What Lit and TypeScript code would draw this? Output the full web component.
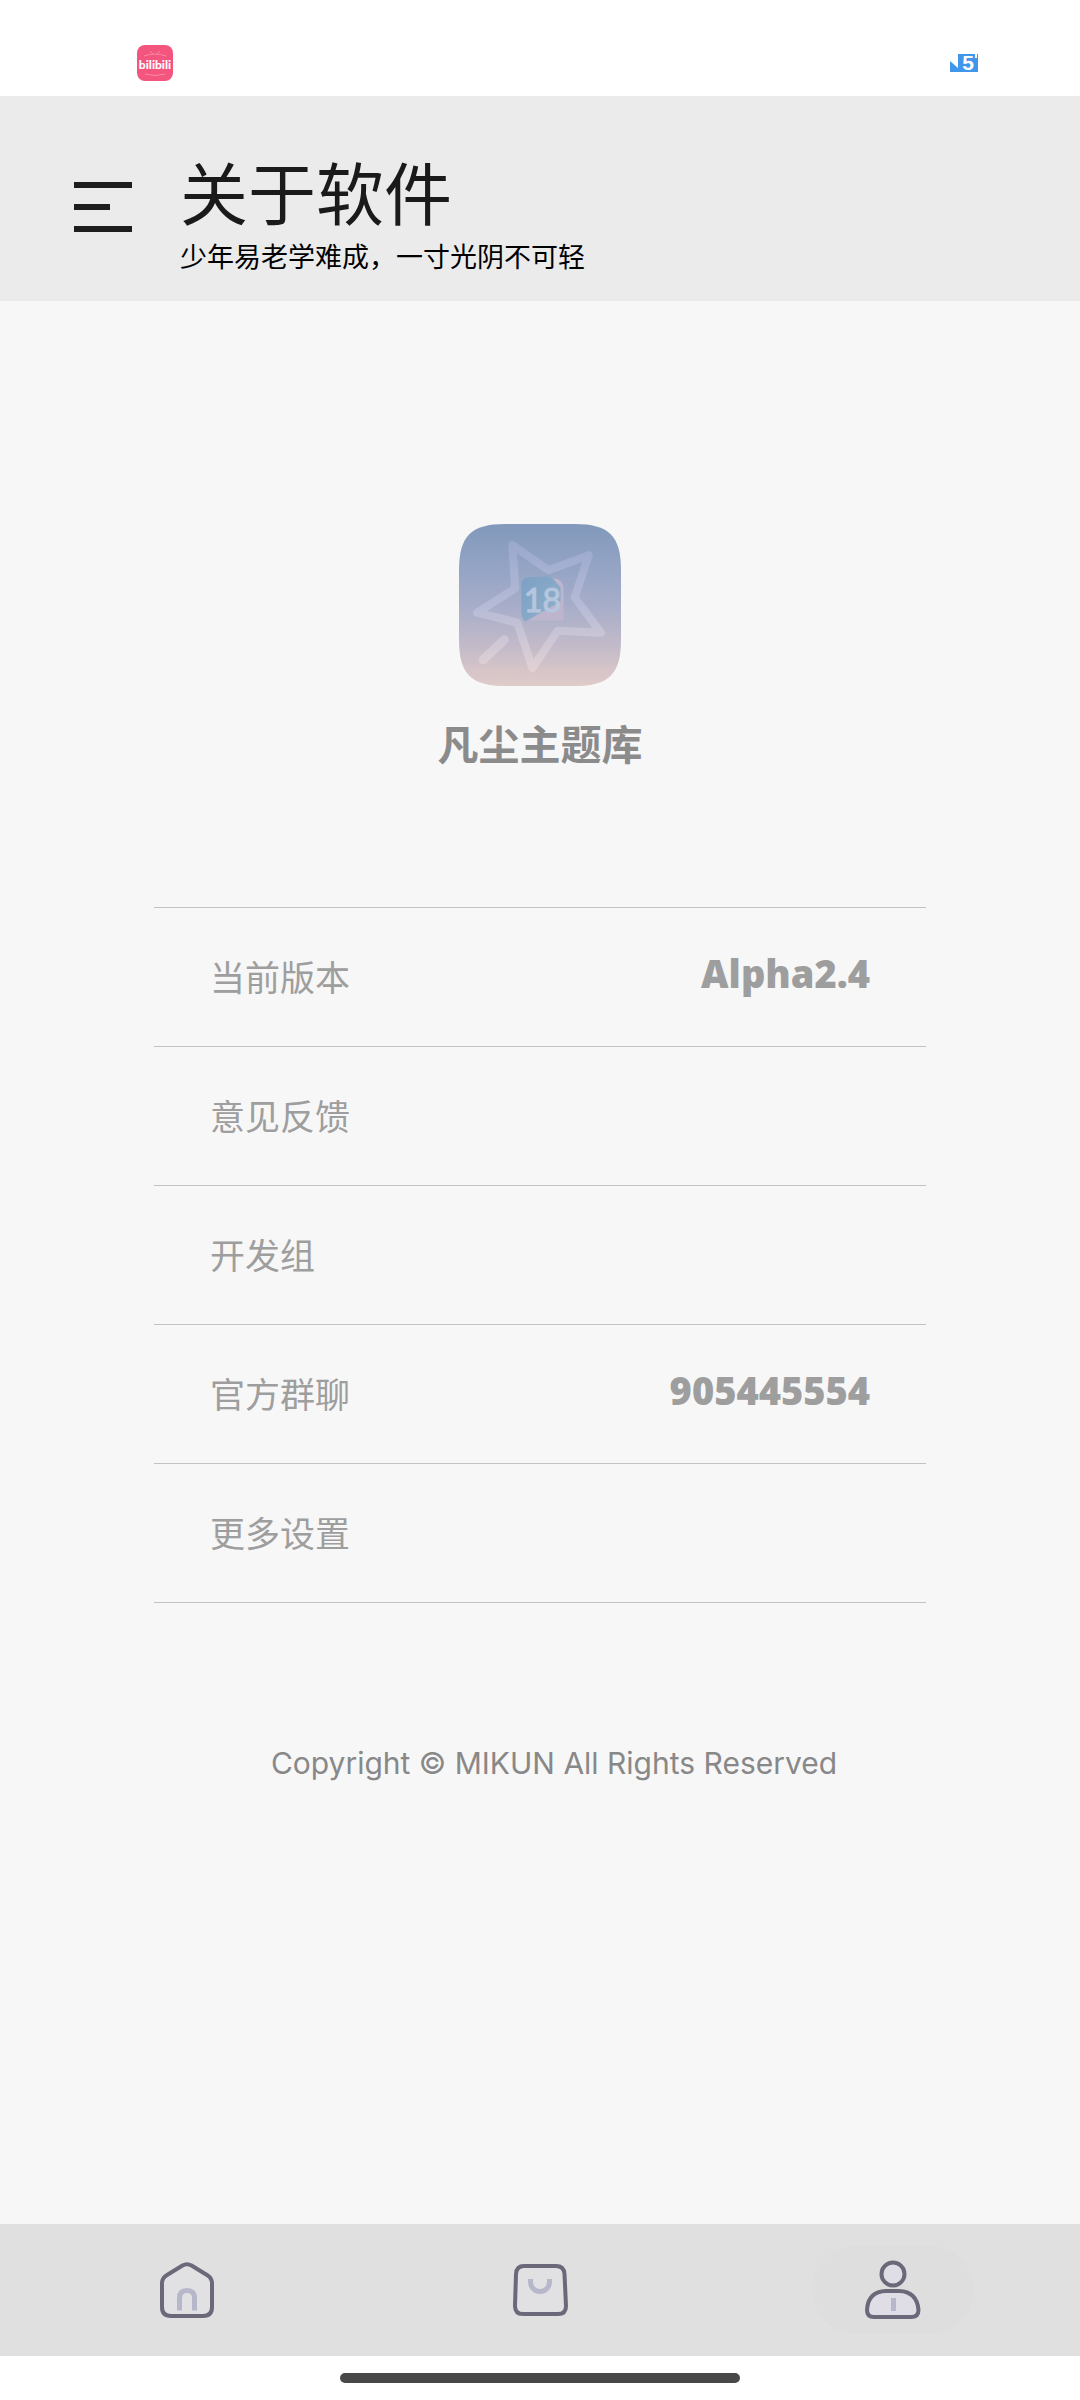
import { LitElement, html, css, svg, nothing } from "lit";
import { customElement, state } from "lit/decorators.js";
import { classMap } from "lit/directives/class-map.js";

interface Row {
  label: string;
  value?: string;
}

const rows: Row[] = [
  { label: "当前版本", value: "Alpha2.4" },
  { label: "意见反馈" },
  { label: "开发组" },
  { label: "官方群聊", value: "905445554" },
  { label: "更多设置" },
];

const homeIcon = svg`
  <path class="fill" d="M25.500 5.500Q30 3 34.500 5.500L50 15Q55 18 55 23V47Q55 56 46 56H14Q5 56 5 47V23Q5 18 10 15Z"/>
  <path class="accent" d="M22.500 50.500V38Q22.500 30.500 30 30.500T37.500 38V50.500"/>`;

const bagIcon = svg`
  <path class="fill" d="M14 6H46Q54 6 54.500 14L56 46Q56 54 48 54H13Q5 54 5 46L6 14Q6.500 6 14 6Z"/>
  <path class="accent" d="M20.500 19V22A9.500 9.500 0 0 0 39.500 22V19"/>`;

const userIcon = svg`
  <circle class="fill" cx="30" cy="14" r="11.500"/>
  <path class="fill" d="M23 31H36Q54 31.500 55.500 50Q55.500 57 48 57H11Q4 57 4 50Q5 31.500 23 31Z"/>
  <path class="accent" d="M30.500 38V51" stroke-linecap="butt"/>`;

const tabs = [
  { id: "home", label: "首页", icon: homeIcon },
  { id: "store", label: "商店", icon: bagIcon },
  { id: "me", label: "我的", icon: userIcon },
];

@customElement("status-bar")
export class StatusBar extends LitElement {
  static styles = css`
    :host {
      display: flex;
      justify-content: space-between;
      align-items: center;
      box-sizing: border-box;
      height: 96px;
      padding: 30px 100px 0 137px;
      background: #ffffff;
    }
    .icon {
      display: block;
    }
  `;

  render() {
    return html`
      <svg class="icon" width="36" height="36" viewBox="0 0 36 36" role="img" aria-label="bilibili">
        <rect width="36" height="36" rx="8" fill="#f4557f" />
        <path d="M13 6l3 3M23 6l-3 3M7 11q11-4 22 0M8 29q10 3 20 0" stroke="#f98aa8" stroke-width="1" fill="none" />
        <text x="18" y="24" text-anchor="middle" font-family="Lato, sans-serif" font-weight="900" font-size="12" fill="#fff">bilibili</text>
      </svg>
      <svg class="icon" width="30" height="32" viewBox="0 -6 30 32" role="img" aria-label="5">
        <path d="M0 8L8 15V1H28V19H0Z" fill="#4096ea" />
        <text x="18" y="17" text-anchor="middle" font-family="Liberation Sans, sans-serif" font-weight="700" font-size="21" fill="#fff">5</text>
        <path d="M26 1v4" stroke="#fff" stroke-width="2" />
      </svg>
    `;
  }
}

@customElement("app-logo")
export class AppLogo extends LitElement {
  static styles = css`
    :host {
      display: block;
    }
    .logo {
      display: block;
    }
  `;

  render() {
    return html`
      <svg class="logo" width="162" height="162" viewBox="0 0 161 161" role="img" aria-label="凡尘主题库">
        <defs>
          <linearGradient id="sky" x1="0" y1="0" x2="0" y2="1">
            <stop offset="0" stop-color="#8199bb" />
            <stop offset="0.250" stop-color="#93a3c4" />
            <stop offset="0.500" stop-color="#a6adc9" />
            <stop offset="0.750" stop-color="#c2bac9" />
            <stop offset="0.900" stop-color="#d6c4c8" />
            <stop offset="1" stop-color="#dfcbc9" />
          </linearGradient>
          <linearGradient id="line" gradientUnits="userSpaceOnUse" x1="0" y1="20" x2="0" y2="145">
            <stop offset="0" stop-color="#9ba9ce" />
            <stop offset="0.500" stop-color="#b6bbd6" />
            <stop offset="1" stop-color="#e2d1d4" />
          </linearGradient>
          <linearGradient id="badge" x1="0" y1="0" x2="1" y2="1">
            <stop offset="0" stop-color="#7d9fc2" />
            <stop offset="1" stop-color="#90b2cd" />
          </linearGradient>
        </defs>
        <path
          d="M0 46C0 12 12 0 46 0H115C149 0 161 12 161 46V115C161 149 149 161 115 161H46C12 161 0 149 0 115Z"
          fill="url(#sky)"
        />
        <g fill="none" stroke="url(#line)" stroke-linejoin="round" stroke-linecap="round">
          <path
            stroke-width="8"
            d="M53 21L89 46L129 31L115 73L141 108L98 106L73 143L58 98L18 88L56 64Z"
          />
          <path stroke-width="9" d="M24 135L45 115" />
        </g>
        <path d="M92 54Q104 54 104 66V96H70Z" fill="#bdb5ce" />
        <path d="M62 60Q62 54 69 53L86 52Q91 52 94 55L101 63V77L66 97Q62 94 62 88Z" fill="url(#badge)" />
        <text x="83" y="87" text-anchor="middle" font-family="Liberation Sans Narrow, Lato, sans-serif" font-weight="400" font-size="32" fill="#b6c6de" stroke="#b6c6de" stroke-width="1">18</text>
      </svg>
    `;
  }
}

@customElement("app-root")
export class AppRoot extends LitElement {
  static styles = css`
    :host {
      display: flex;
      flex-direction: column;
      min-height: 100vh;
      background: #f7f7f7;
      font-family: Inter, "Noto Sans CJK SC", sans-serif;
    }
    button {
      border: 0;
      padding: 0;
      background: none;
      font: inherit;
      color: inherit;
    }
    .header {
      display: flex;
      align-items: flex-start;
      gap: 48px;
      box-sizing: border-box;
      min-height: 205px;
      padding: 64px 74px 0;
      background: #ebebeb;
    }
    .menu {
      display: flex;
      flex-direction: column;
      gap: 16px;
      padding-top: 22px;
    }
    .bar {
      width: 58px;
      height: 6px;
      background: #1d1d1d;
    }
    .bar.short {
      width: 36px;
    }
    .titles {
      font-family: "Liberation Sans", "Noto Sans CJK SC", sans-serif;
    }
    .title {
      margin: 0;
      font-size: 68px;
      line-height: 72px;
      font-weight: 400;
      color: #1a1a1a;
    }
    .subtitle {
      margin: 0;
      font-size: 27px;
      line-height: 52px;
      color: #000000;
    }
    .main {
      flex: 1;
      display: flex;
      flex-direction: column;
      align-items: center;
      padding: 223px 154px 0;
    }
    .brand {
      margin: 27px 0 0;
      font-size: 41px;
      line-height: 64px;
      font-weight: 700;
      color: #8b8b8b;
    }
    .list {
      align-self: stretch;
      margin: 130px 0 0;
      padding: 0;
      list-style: none;
      border-top: 1px solid #c3c3c3;
    }
    .item {
      border-bottom: 1px solid #c3c3c3;
    }
    .row {
      display: flex;
      justify-content: space-between;
      align-items: center;
      box-sizing: border-box;
      width: 100%;
      height: 138px;
      padding: 0 56px 2px;
      color: #9e9e9e;
    }
    .label {
      font-family: "Noto Sans CJK SC", sans-serif;
      font-size: 35px;
      line-height: 48px;
    }
    .value {
      padding-bottom: 6px;
      font-family: "Open Sans", sans-serif;
      font-size: 38px;
      line-height: 48px;
      font-weight: 800;
    }
    .copyright {
      margin: 136px 0 0;
      padding-left: 28px;
      font-size: 30px;
      line-height: 48px;
      color: #888888;
    }
    .nav {
      display: flex;
      align-items: center;
      height: 132px;
      padding: 0 10px;
      background: #e0e0e0;
    }
    .tab {
      flex: 1;
      display: flex;
      justify-content: center;
    }
    .pill {
      display: flex;
      align-items: center;
      justify-content: center;
      width: 162px;
      height: 88px;
      border-radius: 44px;
    }
    .pill.active {
      background: #dedede;
    }
    .glyph {
      display: block;
      fill: none;
      stroke-linejoin: round;
    }
    .fill {
      fill: #e1e0e3;
      stroke: #6b6879;
      stroke-width: 4;
    }
    .active .fill {
      fill: #dfdde5;
    }
    .accent {
      stroke: #b6b7cb;
      stroke-width: 5;
    }
    .gesture {
      display: flex;
      justify-content: center;
      box-sizing: border-box;
      height: 44px;
      padding-top: 17px;
      background: #ffffff;
    }
    .handle {
      width: 37%;
      height: 10px;
      border-radius: 5px;
      background: #484848;
    }
  `;

  @state() private current = "me";

  render() {
    return html`
      <status-bar></status-bar>
      <header class="header">
        <button class="menu" aria-label="菜单">
          <span class="bar"></span>
          <span class="bar short"></span>
          <span class="bar"></span>
        </button>
        <div class="titles">
          <h1 class="title">关于软件</h1>
          <p class="subtitle">少年易老学难成，一寸光阴不可轻</p>
        </div>
      </header>
      <main class="main">
        <app-logo></app-logo>
        <h2 class="brand">凡尘主题库</h2>
        <ul class="list">
          ${rows.map(
            (row) => html`
              <li class="item">
                <button class="row">
                  <span class="label">${row.label}</span>
                  ${row.value ? html`<span class="value">${row.value}</span>` : nothing}
                </button>
              </li>
            `
          )}
        </ul>
        <p class="copyright">Copyright © MIKUN All Rights Reserved</p>
      </main>
      <nav class="nav">
        ${tabs.map(
          (tab) => html`
            <button class="tab" aria-label=${tab.label} @click=${() => (this.current = tab.id)}>
              <span class=${classMap({ pill: true, active: this.current === tab.id })}>
                <svg class="glyph" width="60" height="60" viewBox="0 0 60 60" aria-hidden="true">${tab.icon}</svg>
              </span>
            </button>
          `
        )}
      </nav>
      <div class="gesture"><div class="handle"></div></div>
    `;
  }
}
